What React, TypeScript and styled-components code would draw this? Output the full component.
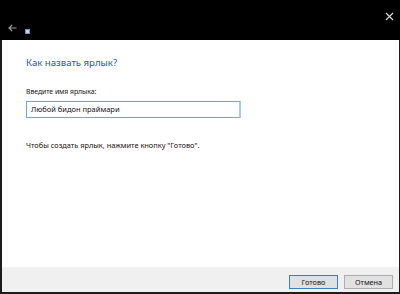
import React from "react";
import styled, { createGlobalStyle } from "styled-components";

const GlobalStyle = createGlobalStyle`
  html, body {
    margin: 0;
    padding: 0;
    background: #000;
  }
  body {
    font-family: "Noto Sans", "Open Sans", sans-serif;
  }
`;

const Window = styled.div`
  width: 400px;
  height: 294px;
  display: flex;
  flex-direction: column;
  background: #1c1c1c;
  overflow: hidden;
`;

const TitleBar = styled.div`
  position: relative;
  height: 40px;
  flex: none;
  background: #000;
`;

const BackButton = styled.div`
  position: absolute;
  left: 7px;
  top: 23px;
  width: 10px;
  height: 10px;
  display: flex;
  align-items: center;
  justify-content: center;
`;

const AppIcon = styled.div`
  position: absolute;
  left: 25px;
  top: 29px;
  width: 5px;
  height: 5px;
  background: #c8d4e6;
  border: 1px solid #6d8fbf;
  box-sizing: border-box;
`;

const CloseButton = styled.div`
  position: absolute;
  right: 6px;
  top: 4px;
  width: 9px;
  height: 9px;
`;

const Content = styled.div`
  flex: 1;
  margin: 0 1px 0 2px;
  background: #fff;
  padding: 16px 0 0 24px;
  display: flex;
  flex-direction: column;
  box-sizing: border-box;
`;

const Heading = styled.h1`
  margin: 0;
  font-size: 9.6px;
  font-weight: 400;
  line-height: 14px;
  color: #2458b5;
`;

const Label = styled.label`
  margin-top: 17px;
  font-size: 6.8px;
  line-height: 10px;
  color: #111;
`;

const TextInput = styled.div`
  margin-top: 4px;
  width: 215px;
  height: 17px;
  box-sizing: border-box;
  border: 1px solid #6fa6de;
  border-right: 2px solid #a9cdf0;
  padding-left: 4px;
  font-size: 7.5px;
  line-height: 15px;
  color: #111;
`;

const Hint = styled.p`
  margin: 22px 0 0;
  font-size: 7.4px;
  line-height: 10px;
  color: #1a1010;
`;

const Footer = styled.div`
  height: 25px;
  flex: none;
  margin: 0 1px 2px 2px;
  background: #f0f0f0;
  display: flex;
  align-items: center;
  justify-content: flex-end;
  gap: 6px;
  padding-right: 6px;
  box-sizing: border-box;
`;

const Button = styled.button<{ $primary?: boolean }>`
  width: 49px;
  height: 14px;
  margin-top: 4px;
  padding: 0;
  box-sizing: border-box;
  background: #e1e1e1;
  border: 1px solid ${({ $primary }) => ($primary ? "#3d7fc4" : "#adadad")};
  font-family: "Noto Sans", "Open Sans", sans-serif;
  font-size: 7.3px;
  line-height: 12px;
  color: #111;
`;

const App: React.FC = () => {
  return (
    <Window>
      <GlobalStyle />
      <TitleBar>
        <BackButton>
          <svg width="9" height="8" viewBox="0 0 9 8">
            <path d="M8.5 4H1.2M4.2 0.8L1 4L4.2 7.2" fill="none" stroke="#a0a0a0" strokeWidth="1.2" />
          </svg>
        </BackButton>
        <AppIcon />
        <CloseButton>
          <svg width="9" height="9" viewBox="0 0 9 9">
            <path d="M1 1L8 8M8 1L1 8" stroke="#d8d8d8" strokeWidth="1.2" />
          </svg>
        </CloseButton>
      </TitleBar>
      <Content>
        <Heading>Как назвать ярлык?</Heading>
        <Label>Введите имя ярлыка:</Label>
        <TextInput>Любой бидон праймари</TextInput>
        <Hint>Чтобы создать ярлык, нажмите кнопку "Готово".</Hint>
      </Content>
      <Footer>
        <Button $primary>Готово</Button>
        <Button>Отмена</Button>
      </Footer>
    </Window>
  );
};

export default App;
